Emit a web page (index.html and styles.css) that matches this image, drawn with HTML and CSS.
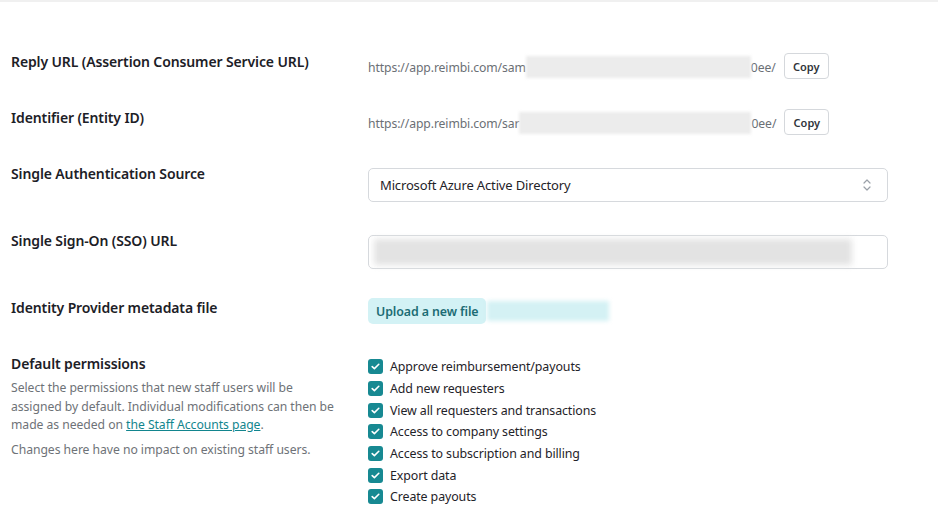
FILE: index.html
```html
<!DOCTYPE html>
<html>
<head>
<meta charset="utf-8">
<link rel="stylesheet" href="styles.css">
</head>
<body>
<div class="topbar"></div>
<form class="settings">
  <div class="row">
    <div class="label">Reply URL (Assertion Consumer Service URL)</div>
    <div class="field field-url">
      <span class="url">https://app.reimbi.com/sam</span><span class="blur blur-url"></span><span class="url">0ee/</span>
      <button type="button" class="copy">Copy</button>
    </div>
  </div>
  <div class="row">
    <div class="label">Identifier (Entity ID)</div>
    <div class="field field-url">
      <span class="url">https://app.reimbi.com/sar</span><span class="blur blur-url2"></span><span class="url">0ee/</span>
      <button type="button" class="copy">Copy</button>
    </div>
  </div>
  <div class="row row-tall">
    <div class="label">Single Authentication Source</div>
    <div class="field field-box">
      <div class="select">
        <span>Microsoft Azure Active Directory</span>
        <svg class="chev" width="10" height="14" viewBox="0 0 10 14"><path d="M2 5 L5 2 L8 5 M2 9 L5 12 L8 9" fill="none" stroke="#9aa0a8" stroke-width="1.2" stroke-linecap="round" stroke-linejoin="round"/></svg>
      </div>
    </div>
  </div>
  <div class="row row-tall">
    <div class="label">Single Sign-On (SSO) URL</div>
    <div class="field field-box">
      <div class="input"><span class="blur blur-input"></span></div>
    </div>
  </div>
  <div class="row">
    <div class="label">Identity Provider metadata file</div>
    <div class="field field-upload">
      <button type="button" class="upload">Upload a new file</button><span class="blur blur-file"></span>
    </div>
  </div>
  <div class="row">
    <div class="label-block">
      <div class="label">Default permissions</div>
      <p class="desc">Select the permissions that new staff users will be assigned by default. Individual modifications can then be made as needed on <a href="#">the Staff Accounts page</a>.</p>
      <p class="desc desc2">Changes here have no impact on existing staff users.</p>
    </div>
    <ul class="checks">
      <li><span class="cb"><svg width="9" height="7" viewBox="0 0 9 7"><path d="M1.2 3.6 L3.4 5.6 L7.8 1.3" fill="none" stroke="#fff" stroke-width="1.6" stroke-linecap="round" stroke-linejoin="round"/></svg></span>Approve reimbursement/payouts</li>
      <li><span class="cb"><svg width="9" height="7" viewBox="0 0 9 7"><path d="M1.2 3.6 L3.4 5.6 L7.8 1.3" fill="none" stroke="#fff" stroke-width="1.6" stroke-linecap="round" stroke-linejoin="round"/></svg></span>Add new requesters</li>
      <li><span class="cb"><svg width="9" height="7" viewBox="0 0 9 7"><path d="M1.2 3.6 L3.4 5.6 L7.8 1.3" fill="none" stroke="#fff" stroke-width="1.6" stroke-linecap="round" stroke-linejoin="round"/></svg></span>View all requesters and transactions</li>
      <li><span class="cb"><svg width="9" height="7" viewBox="0 0 9 7"><path d="M1.2 3.6 L3.4 5.6 L7.8 1.3" fill="none" stroke="#fff" stroke-width="1.6" stroke-linecap="round" stroke-linejoin="round"/></svg></span>Access to company settings</li>
      <li><span class="cb"><svg width="9" height="7" viewBox="0 0 9 7"><path d="M1.2 3.6 L3.4 5.6 L7.8 1.3" fill="none" stroke="#fff" stroke-width="1.6" stroke-linecap="round" stroke-linejoin="round"/></svg></span>Access to subscription and billing</li>
      <li><span class="cb"><svg width="9" height="7" viewBox="0 0 9 7"><path d="M1.2 3.6 L3.4 5.6 L7.8 1.3" fill="none" stroke="#fff" stroke-width="1.6" stroke-linecap="round" stroke-linejoin="round"/></svg></span>Export data</li>
      <li><span class="cb"><svg width="9" height="7" viewBox="0 0 9 7"><path d="M1.2 3.6 L3.4 5.6 L7.8 1.3" fill="none" stroke="#fff" stroke-width="1.6" stroke-linecap="round" stroke-linejoin="round"/></svg></span>Create payouts</li>
    </ul>
  </div>
</form>
</body>
</html>
```
FILE: styles.css
```css
* { box-sizing: border-box; }
html, body { margin: 0; padding: 0; background: #fff; }
body {
  font-family: "Noto Sans", "Open Sans", sans-serif;
  color: #1f2329;
  width: 938px;
  height: 528px;
  overflow: hidden;
}
.topbar { height: 2px; background: #f0f0f0; }
.settings { padding: 50px 0 0 11px; }
.row {
  display: grid;
  grid-template-columns: 357px 520px;
  min-height: 56px;
  align-items: start;
}
.row-tall { min-height: 67px; }
.label {
  font-size: 14px;
  font-weight: 600;
  line-height: 20px;
  letter-spacing: -0.12px;
  color: #1c2026;
}
.field { display: flex; align-items: center; }
.field-url { margin-top: 1px; height: 26px; }
.url {
  font-size: 12.2px;
  letter-spacing: -0.1px;
  color: #6b6f75;
  line-height: 26px;
  padding-top: 3px;
}
.blur {
  display: inline-block;
  background: #ececec;
  filter: blur(1.5px);
}
.blur-url { width: 225px; height: 22px; margin-top: 2px; }
.blur-url2 { width: 232px; height: 22px; margin-top: 2px; }
.copy {
  margin-left: 8px;
  width: 45px;
  height: 26px;
  border: 1px solid #d5d8dc;
  border-radius: 4px;
  background: #fff;
  font-family: inherit;
  font-size: 11px;
  font-weight: 600;
  color: #30343a;
  padding: 0;
}
.field-box { margin-top: 4px; }
.select, .input {
  width: 520px;
  height: 34px;
  border: 1px solid #d6d9dd;
  border-radius: 5px;
  display: flex;
  align-items: center;
  justify-content: space-between;
  padding: 0 15px 0 11px;
  font-size: 13px;
  letter-spacing: -0.15px;
  color: #1f2329;
}
.input { padding: 0 35px 0 5px; }
.blur-input { width: 478px; height: 26px; background: #e3e3e3; filter: blur(3px); }
.field-upload { height: 26px; }
.upload {
  height: 26px;
  padding: 0 8px;
  border: 0;
  border-radius: 5px;
  background: #d3f2f5;
  color: #1c6c74;
  font-family: inherit;
  font-size: 12.4px;
  letter-spacing: -0.1px;
  font-weight: 600;
}
.blur-file { width: 122px; height: 20px; background: #d4f1f4; filter: blur(2px); margin-left: 1px; }
.label-block .label { margin-bottom: 5px; }
.desc {
  margin: 0;
  font-size: 12.2px;
  line-height: 18.5px;
  letter-spacing: -0.05px;
  color: #6e7277;
  width: 335px;
}
.desc a { color: #12858e; }
.desc2 { margin-top: 6px; }
.checks { list-style: none; margin: 2px 0 0; padding: 0; }
.checks li {
  display: flex;
  align-items: center;
  height: 21.67px;
  font-size: 12.4px;
  letter-spacing: -0.1px;
  color: #1f2329;
}
.cb {
  width: 15px;
  height: 15px;
  border-radius: 3px;
  background: #178992;
  display: flex;
  align-items: center;
  justify-content: center;
  margin-right: 7px;
}
```
